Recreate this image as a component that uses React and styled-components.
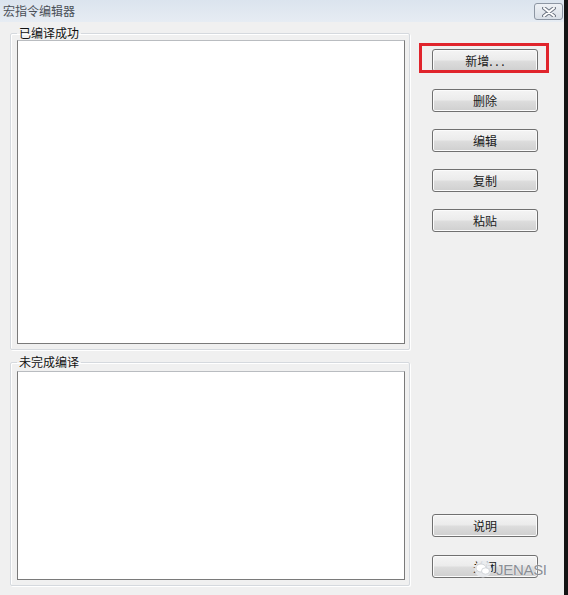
import React from "react";
import styled, { createGlobalStyle } from "styled-components";

const GlobalStyle = createGlobalStyle`
  html, body {
    margin: 0;
    padding: 0;
    background: #f0f0f0;
  }
  body {
    font-family: "Noto Sans CJK SC", "Liberation Sans", sans-serif;
    font-size: 12px;
    color: #111;
  }
`;

const Window = styled.div`
  width: 564px;
  height: 595px;
  border-right: 4px solid #141414;
  background: #f0f0f0;
  display: flex;
  flex-direction: column;
  overflow: hidden;
`;

const TitleBar = styled.div`
  height: 22px;
  flex: none;
  display: flex;
  align-items: center;
  justify-content: space-between;
  padding: 0 1px 0 3px;
  background: linear-gradient(#dbe4ee, #e6ecf3);
`;

const Title = styled.span`
  font-size: 12px;
  line-height: 14px;
  color: #4a4f57;
  margin-top: -1px;
`;

const CloseBox = styled.div`
  width: 27px;
  height: 15px;
  margin-top: 1px;
  border: 1px solid #8d96a3;
  border-radius: 3px;
  background: linear-gradient(#eef1f5, #d9dfe7);
  display: flex;
  align-items: center;
  justify-content: center;
`;

const Body = styled.div`
  flex: 1;
  display: flex;
  padding: 4px 0 0 10px;
`;

const LeftColumn = styled.div`
  width: 400px;
  display: flex;
  flex-direction: column;
  gap: 5px;
`;

const Group = styled.fieldset`
  margin: 0;
  padding: 0 4px 5px 6px;
  border: 1px solid #d5d9de;
  border-radius: 2px;
  box-shadow: inset 1px 1px 0 #fff, 1px 1px 0 #fff;
`;

const Legend = styled.legend`
  padding: 0 2px;
  font-size: 12px;
  line-height: 14px;
  color: #111;
`;

const ListBox = styled.div`
  height: ${(p) => p.$h}px;
  margin-top: ${(p) => p.$top}px;
  background: #fff;
  border: 1px solid #7a7a7a;
  border-top-color: #b9bcc0;
`;

const RightColumn = styled.div`
  width: 106px;
  margin-left: 22px;
  padding-top: 23px;
  display: flex;
  flex-direction: column;
  gap: 17px;
`;

const Spacer = styled.div`
  flex: 1;
`;

const ButtonWrap = styled.div`
  position: relative;
  margin-top: ${(p) => p.$mt || 0}px;
`;

const Button = styled.button`
  width: 106px;
  height: 23px;
  padding: 0;
  border: 1px solid #707070;
  border-radius: 3px;
  background: linear-gradient(#f4f4f4 0%, #ececec 45%, #dcdcdc 55%, #cfcfcf 100%);
  font-family: "Noto Sans CJK SC", "Liberation Sans", sans-serif;
  font-size: 12px;
  font-weight: 400;
  line-height: 21px;
  color: #1a1a1a;
  box-shadow: inset 0 0 0 1px #fbfbfb;
`;

const Highlight = styled.div`
  position: absolute;
  left: -13px;
  top: -6px;
  width: 124px;
  height: 24px;
  border: 3px solid #e0242c;
  pointer-events: none;
`;

const Watermark = styled.div`
  position: absolute;
  left: 41px;
  top: 5px;
  display: flex;
  align-items: center;
  gap: 3px;
  pointer-events: none;
`;

const MarkText = styled.span`
  font-family: "Liberation Sans", sans-serif;
  font-size: 15px;
  color: #8a8f96;
  letter-spacing: -0.3px;
  text-shadow: 0 0 2px #fff;
`;

function WatermarkLogo() {
  return (
    <svg width="20" height="18" viewBox="0 0 20 18">
      <circle cx="10" cy="9" r="8.5" fill="#e9ebee" opacity="0.9" />
      <ellipse cx="8" cy="8" rx="5" ry="4" fill="#fff" stroke="#c8ccd1" strokeWidth="0.8" />
      <ellipse cx="12.5" cy="11" rx="4" ry="3.2" fill="#fff" stroke="#c8ccd1" strokeWidth="0.8" />
    </svg>
  );
}

function CloseGlyph() {
  return (
    <svg width="14" height="10" viewBox="0 0 14 10">
      <path
        d="M2 1 L12 9 M12 1 L2 9"
        stroke="#6f7784"
        strokeWidth="4"
        strokeLinecap="round"
      />
      <path
        d="M2 1 L12 9 M12 1 L2 9"
        stroke="#fff"
        strokeWidth="2"
        strokeLinecap="round"
      />
    </svg>
  );
}

const topButtons = ["删除", "编辑", "复制", "粘贴"];

export default function App() {
  return (
    <Window>
      <GlobalStyle />
      <TitleBar>
        <Title>宏指令编辑器</Title>
        <CloseBox>
          <CloseGlyph />
        </CloseBox>
      </TitleBar>
      <Body>
        <LeftColumn>
          <Group>
            <Legend>已编译成功</Legend>
            <ListBox $h={302} $top={0} />
          </Group>
          <Group>
            <Legend>未完成编译</Legend>
            <ListBox $h={207} $top={2} />
          </Group>
        </LeftColumn>
        <RightColumn>
          <ButtonWrap>
            <Button>新增. . .</Button>
            <Highlight />
          </ButtonWrap>
          {topButtons.map((label) => (
            <ButtonWrap key={label}>
              <Button>{label}</Button>
            </ButtonWrap>
          ))}
          <Spacer />
          <ButtonWrap>
            <Button>说明</Button>
          </ButtonWrap>
          <ButtonWrap $mt={1}>
            <Button>关闭</Button>
            <Watermark>
              <WatermarkLogo />
              <MarkText>JENASI</MarkText>
            </Watermark>
          </ButtonWrap>
          <div style={{ height: 0 }} />
        </RightColumn>
      </Body>
    </Window>
  );
}
